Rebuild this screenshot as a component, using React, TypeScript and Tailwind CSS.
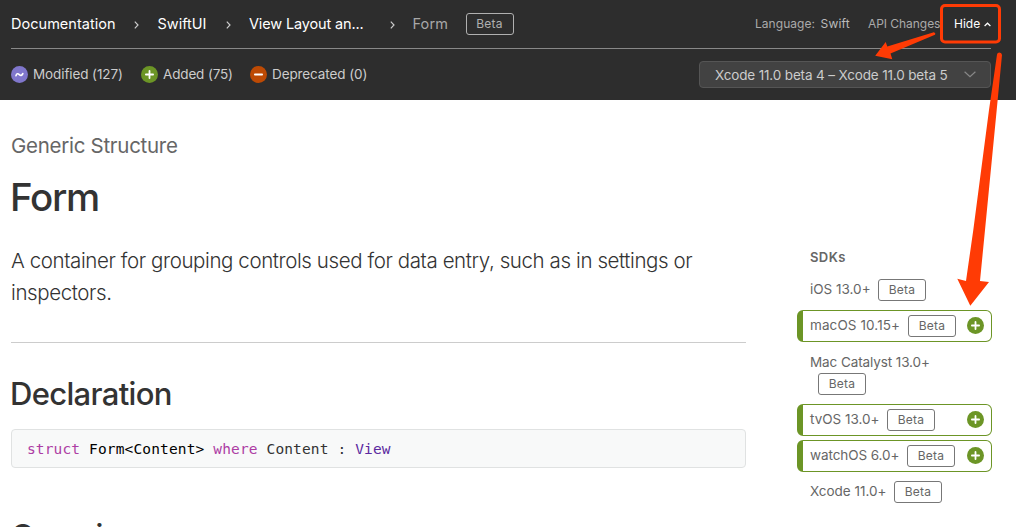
import type { ReactNode } from "react";

function Beta({ dark = false }: { dark?: boolean }) {
  return (
    <span
      className={
        dark
          ? "flex h-[22px] w-[48px] shrink-0 items-center justify-center rounded-[3px] border border-[#b0b0b0] text-[12px] tracking-[0.2px] text-[#b0b0b0]"
          : "flex h-[22px] w-[48px] shrink-0 items-center justify-center rounded-[3px] border border-[#777] text-[12px] tracking-[0.2px] text-[#666]"
      }
    >
      Beta
    </span>
  );
}

function Badge({ kind }: { kind: "modified" | "added" | "deprecated" }) {
  const fill = { modified: "#8077cc", added: "#6c9526", deprecated: "#bd4a04" }[kind];
  return (
    <svg className="size-[17px] shrink-0" viewBox="0 0 17 17" fill="none" stroke="#fff" strokeLinecap="round">
      <circle cx="8.5" cy="8.5" r="8.5" fill={fill} stroke="none" />
      {kind === "modified" && <path d="M5 9.6C5.6 7.2 7 7.4 8.3 8.6S11 9.8 11.8 7.6" strokeWidth="1.7" />}
      {kind === "added" && <path d="M4.9 8.5h7.2M8.5 4.9v7.2" strokeWidth="1.8" />}
      {kind === "deprecated" && <path d="M4.9 8.5h7.2" strokeWidth="1.8" />}
    </svg>
  );
}

function Crumb() {
  return (
    <svg className="mt-[2px] h-[8px] w-[5px] shrink-0" viewBox="0 0 5 8" fill="none" stroke="#ccc" strokeWidth="1.2">
      <path d="M0.8 0.6L4 4L0.8 7.4" />
    </svg>
  );
}

function Changed({ children }: { children: ReactNode }) {
  return (
    <li className="mt-[4px] flex h-[32px] items-center rounded-[6px] border border-l-[6px] border-[#6c9526] pr-[7px] pl-[7px]">
      {children}
      <span className="mb-px ml-auto flex">
        <Badge kind="added" />
      </span>
    </li>
  );
}

export default function App() {
  return (
    <div className="relative h-[527px] w-[1016px] overflow-hidden bg-white font-['Inter',sans-serif] text-[#333]">
      <header className="h-[100px] bg-[#2d2d2d] pr-[25px] pl-[11px]">
        <div className="flex h-[49px] items-center border-b border-[#888] whitespace-nowrap">
          <nav className="flex items-center text-[14.5px] text-white">
            <span className="w-[123px] tracking-[0.03px]">Documentation</span>
            <Crumb />
            <span className="ml-[18.5px] w-[68px] tracking-[0px]">SwiftUI</span>
            <Crumb />
            <span className="ml-[18.5px] w-[140.5px] tracking-[-0.14px]">View Layout an...</span>
            <Crumb />
            <span className="ml-[18px] w-[53px] tracking-[0.1px] text-[#a8a8a8]">Form</span>
            <Beta dark />
          </nav>
          <div className="ml-auto flex items-center text-[12px] text-[#aaa]">
            <span className="w-[65.5px] tracking-[0.05px]">Language:</span>
            <span className="w-[47.5px] tracking-[0.2px] text-[#bbb]">Swift</span>
            <span className="w-[86px] tracking-[-0.05px]">API Changes</span>
            <span className="w-[30px] tracking-[0px] text-white">Hide</span>
            <svg className="mt-px h-[5px] w-[7px]" viewBox="0 0 7 5" fill="none" stroke="#fff" strokeWidth="1.2">
              <path d="M0.6 4L3.5 1.2L6.4 4" />
            </svg>
          </div>
        </div>
        <div className="flex h-[51px] items-center text-[13.5px] whitespace-nowrap text-[#ccc]">
          <Badge kind="modified" />
          <span className="ml-[5px] w-[108px] tracking-[-0.1px]">Modified (127)</span>
          <Badge kind="added" />
          <span className="ml-[5px] w-[87px] tracking-[-0.15px]">Added (75)</span>
          <Badge kind="deprecated" />
          <span className="ml-[5px] tracking-[-0.1px]">Deprecated (0)</span>
          <button className="ml-auto flex h-[27px] w-[292px] items-center rounded-[4px] border border-[#555] bg-[#424242] pt-px pr-[14px] pl-[15px] text-[13.5px] text-[#ccc]">
            <span className="tracking-[-0.15px]">Xcode 11.0 beta 4 – Xcode 11.0 beta 5</span>
            <svg className="mb-px ml-auto h-[7px] w-[12px]" viewBox="0 0 12 7" fill="none" stroke="#888" strokeWidth="1.2">
              <path d="M0.6 0.8L6 5.8L11.4 0.8" />
            </svg>
          </button>
        </div>
      </header>

      <div className="flex pl-[11px]">
        <main className="w-[735px] pt-[30px]">
          <p className="h-[43px] text-[20.5px] leading-[32px] tracking-[-0.28px] text-[#666]">Generic Structure</p>
          <h1 className="-ml-px h-[72px] text-[38.5px] leading-[49px] font-medium tracking-[-1.3px]">Form</h1>
          <p className="h-[97px] text-[20.5px] leading-[32px] font-light tracking-[-0.4px] whitespace-nowrap">
            A container for grouping controls used for data entry, such as in settings or
            <br />
            inspectors.
          </p>
          <hr className="border-[#ccc]" />
          <h2 className="mt-[31px] -ml-px text-[31px] leading-[40px] font-medium tracking-[-0.67px]">Declaration</h2>
          <pre className="mt-[15px] h-[39px] rounded-[4px] border border-[#e0e2e2] bg-[#f8f9f9] pl-[15px] font-['DejaVu_Sans_Mono',monospace] text-[14.5px] leading-[38px] tracking-[0.14px]">
            <span className="text-[#ad3da4]">struct</span> <span className="text-black">Form&lt;Content&gt;</span>{" "}
            <span className="text-[#ad3da4]">where</span> Content : <span className="text-[#5c2aa0]">View</span>
          </pre>
          <h2 className="mt-[48px] text-[31px] leading-[40px] font-medium tracking-[-1px]">Overview</h2>
        </main>

        <aside className="ml-[51px] w-[195px] pt-[148px] text-[13.5px] whitespace-nowrap text-[#666]">
          <h3 className="pl-[13px] text-[13px] leading-[18px] font-semibold tracking-[0.4px]">SDKs</h3>
          <ul className="mt-[8px] flex flex-col">
            <li className="flex h-[32px] items-center pl-[13px]">
              <span className="mb-[2px] w-[68px] tracking-[0px]">iOS 13.0+</span>
              <Beta />
            </li>
            <Changed>
              <span className="mb-[2px] w-[98px] shrink-0 tracking-[0.1px]">macOS 10.15+</span>
              <Beta />
            </Changed>
            <li className="mt-[9px] mb-[5px] pl-[13px]">
              <span className="block h-[22px] leading-[22px] tracking-[-0.1px]">Mac Catalyst 13.0+</span>
              <div className="pl-[8px]">
                <Beta />
              </div>
            </li>
            <Changed>
              <span className="mb-[2px] w-[77px] shrink-0 tracking-[-0.02px]">tvOS 13.0+</span>
              <Beta />
            </Changed>
            <Changed>
              <span className="mb-[2px] w-[97px] shrink-0 tracking-[-0.08px]">watchOS 6.0+</span>
              <Beta />
            </Changed>
            <li className="mt-[4px] flex h-[32px] items-center pl-[13px]">
              <span className="mb-[2px] w-[84px] tracking-[-0.02px]">Xcode 11.0+</span>
              <Beta />
            </li>
          </ul>
        </aside>
      </div>

      <svg className="pointer-events-none absolute inset-0" width="1016" height="527" viewBox="0 0 1016 527" fill="#ff3b05">
        <rect x="941.5" y="5.5" width="58" height="36.5" rx="3.5" fill="none" stroke="#ff3b05" strokeWidth="3" />
        <path d="M933.8 32.2Q936 32.8 935 34.7L890.5 53.5L892.3 59.3L875.2 55.7L885.7 42L887.3 46.4Z" />
        <path d="M997 54.5Q997.3 52.5 999.5 52.5T1002 55L996.7 110L985 230L980 281L989 282L970.3 305.7L957.3 278.7L966 281L973.3 230L989 110Z" />
      </svg>
    </div>
  );
}
